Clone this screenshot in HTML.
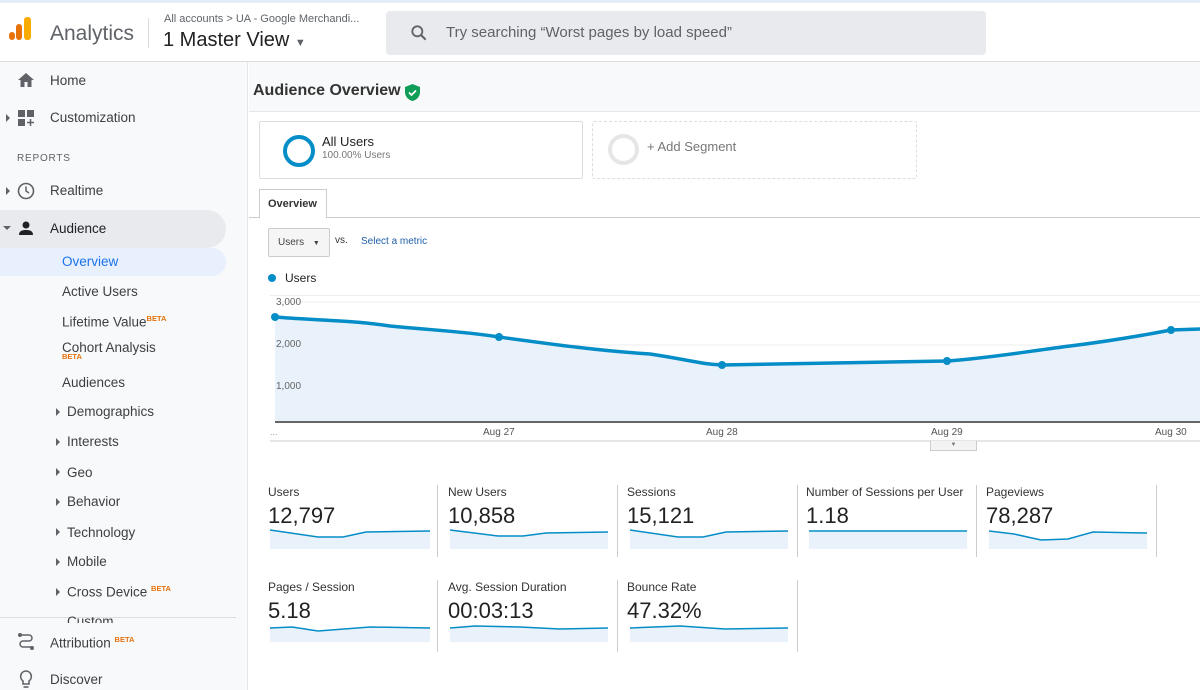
<!DOCTYPE html>
<html><head><meta charset="utf-8"><style>
*{margin:0;padding:0;box-sizing:border-box}
body{width:1200px;height:690px;overflow:hidden;font-family:"Liberation Sans",Arial,sans-serif;background:#fff;position:relative;color:#333}
.a{position:absolute}
#top{left:0;top:0;width:1200px;height:62px;background:#fff;border-top:3px solid #e3eef9;border-bottom:1px solid #dadce0}
#side{left:0;top:62px;width:248px;height:628px;background:#f8f9fa;border-right:1px solid #e6e6e6}
.nav{position:absolute;font-size:13.5px;color:#3c4043}
.sub{position:absolute;left:62px;font-size:13.5px;color:#3c4043}
.sub2{position:absolute;left:67px;font-size:13.5px;color:#3c4043}
.tri{position:absolute;left:56px;width:0;height:0;border-top:4px solid transparent;border-bottom:4px solid transparent;border-left:4px solid #5f6368}
.beta{font-size:7.5px;color:#e8710a;font-weight:bold;vertical-align:super}
.lab{position:absolute;font-size:12px;color:#333}
.val{position:absolute;font-size:22px;color:#222}
.sep{position:absolute;width:1px;background:#ccc}
</style></head><body>
<div id="top" class="a">
 <div class="a" style="left:9px;top:29px;width:6px;height:8px;border-radius:3px;background:#e8710a"></div>
 <div class="a" style="left:16px;top:21px;width:6px;height:16px;border-radius:3px;background:#e8710a"></div>
 <div class="a" style="left:24px;top:14px;width:7px;height:23px;border-radius:3px;background:#f9ab00"></div>
 <div class="a" style="left:50px;top:19px;font-size:21px;color:#5f6368">Analytics</div>
 <div class="a" style="left:148px;top:15px;width:1px;height:30px;background:#dadce0"></div>
 <div class="a" style="left:164px;top:10px;font-size:11px;color:#5f6368">All accounts &gt; UA - Google Merchandi...</div>
 <div class="a" style="left:163px;top:26px;font-size:20px;color:#202124">1 Master View <span style="font-size:11px;color:#5f6368">▼</span></div>
 <div class="a" style="left:386px;top:8px;width:600px;height:44px;background:#e8eaed;border-radius:4px"></div>
 <svg class="a" style="left:409px;top:20px" width="20" height="20" viewBox="0 0 24 24"><circle cx="10" cy="10" r="6" fill="none" stroke="#5f6368" stroke-width="2.2"/><path d="M14.5 14.5L20 20" stroke="#5f6368" stroke-width="2.5"/></svg>
 <div class="a" style="left:446px;top:21px;font-size:15px;color:#5f6368">Try searching “Worst pages by load speed”</div>
</div>
<div id="side" class="a">
 <div class="a" style="left:0;top:148px;width:226px;height:38px;background:#e8eaed;border-radius:0 19px 19px 0"></div>
 <div class="a" style="left:0;top:186px;width:226px;height:28px;background:#e8f0fe;border-radius:0 14px 14px 0"></div>
 <div class="a" style="left:0;top:555px;width:236px;height:1px;background:#ddd"></div>
</div>
<svg class="a" style="left:17px;top:72px" width="18" height="16" viewBox="0 0 18 16"><path d="M9 1L1 8h2.5v7h4v-5h3v5h4V8H17z" fill="#5f6368"/></svg>
<div class="nav" style="left:50px;top:73px">Home</div>
<div class="a" style="left:6px;top:114px;border-top:4px solid transparent;border-bottom:4px solid transparent;border-left:4px solid #5f6368"></div>
<svg class="a" style="left:18px;top:110px" width="16" height="16"><rect x="0" y="0" width="7" height="7" fill="#5f6368"/><rect x="9" y="0" width="7" height="7" fill="#5f6368"/><rect x="0" y="9" width="7" height="7" fill="#5f6368"/><path d="M12.5 9v7M9 12.5h7" stroke="#5f6368" stroke-width="1.5"/></svg>
<div class="nav" style="left:50px;top:110px">Customization</div>
<div class="a" style="left:17px;top:153px;font-size:10px;color:#5f6368;letter-spacing:.8px">REPORTS</div>
<div class="a" style="left:6px;top:187px;border-top:4px solid transparent;border-bottom:4px solid transparent;border-left:4px solid #5f6368"></div>
<svg class="a" style="left:17px;top:182px" width="18" height="18"><circle cx="9" cy="9" r="7.5" fill="none" stroke="#5f6368" stroke-width="1.6"/><path d="M9 4.5V9l3 2" fill="none" stroke="#5f6368" stroke-width="1.5"/></svg>
<div class="nav" style="left:50px;top:183px">Realtime</div>
<div class="a" style="left:3px;top:226px;border-left:4px solid transparent;border-right:4px solid transparent;border-top:4px solid #5f6368"></div>
<svg class="a" style="left:18px;top:221px" width="16" height="14"><circle cx="8" cy="4" r="3.5" fill="#202124"/><path d="M1 14c0-4 3-5 7-5s7 1 7 5z" fill="#202124"/></svg>
<div class="nav" style="left:50px;top:221px;color:#202124">Audience</div>
<div class="sub" style="top:254px;color:#1a73e8">Overview</div>
<div class="sub" style="top:284px">Active Users</div>
<div class="sub" style="top:314px">Lifetime Value<span class="beta">BETA</span></div>
<div class="sub" style="top:340px">Cohort Analysis</div>
<div class="a beta" style="left:62px;top:352px;vertical-align:baseline">BETA</div>
<div class="sub" style="top:375px">Audiences</div>
<div class="tri" style="top:408px"></div><div class="sub2" style="top:404px">Demographics</div>
<div class="tri" style="top:438px"></div><div class="sub2" style="top:434px">Interests</div>
<div class="tri" style="top:468px"></div><div class="sub2" style="top:465px">Geo</div>
<div class="tri" style="top:498px"></div><div class="sub2" style="top:494px">Behavior</div>
<div class="tri" style="top:528px"></div><div class="sub2" style="top:525px">Technology</div>
<div class="tri" style="top:558px"></div><div class="sub2" style="top:554px">Mobile</div>
<div class="tri" style="top:588px"></div><div class="sub2" style="top:584px">Cross Device <span class="beta">BETA</span></div>
<div class="a" style="left:0;top:612px;width:236px;height:11px;overflow:hidden"><div class="sub2" style="top:2px">Custom</div></div>
<svg class="a" style="left:17px;top:632px" width="18" height="20"><circle cx="3" cy="3" r="2" fill="#5f6368"/><circle cx="15" cy="16" r="2" fill="#5f6368"/><path d="M3 3h9a3 3 0 0 1 0 6H6a3 3 0 0 0 0 6h9" fill="none" stroke="#5f6368" stroke-width="1.5"/></svg>
<div class="nav" style="left:50px;top:635px">Attribution <span class="beta">BETA</span></div>
<svg class="a" style="left:19px;top:670px" width="14" height="20"><path d="M7 1a5.5 5.5 0 0 0-3 10v3h6v-3A5.5 5.5 0 0 0 7 1z" fill="none" stroke="#5f6368" stroke-width="1.6"/><path d="M4.5 17h5" stroke="#5f6368" stroke-width="1.6"/></svg>
<div class="nav" style="left:50px;top:672px">Discover</div>

<!-- main -->
<div class="a" style="left:249px;top:62px;width:951px;height:50px;background:#f8f9fa;border-bottom:1px solid #e6e6e6"></div>
<div class="a" style="left:253px;top:82px;font-size:16px;font-weight:bold;color:#333">Audience Overview</div>
<svg class="a" style="left:405px;top:84px" width="15" height="17" viewBox="0 0 15 17"><path d="M7.5 0L0 3v5c0 4.5 3.2 8 7.5 9C11.8 16 15 12.5 15 8V3z" fill="#0f9d58"/><path d="M4 8.5l2.5 2.5L11 6.5" fill="none" stroke="#fff" stroke-width="1.7"/></svg>
<div class="a" style="left:259px;top:121px;width:324px;height:58px;border:1px solid #ddd;border-radius:2px"></div>
<div class="a" style="left:283px;top:135px;width:32px;height:32px;border:4px solid #058dc7;border-radius:50%"></div>
<div class="a" style="left:322px;top:134px;font-size:13px;color:#222">All Users</div>
<div class="a" style="left:322px;top:150px;font-size:10px;color:#777">100.00% Users</div>
<div class="a" style="left:592px;top:121px;width:325px;height:58px;border:1px dashed #ddd;border-radius:2px"></div>
<div class="a" style="left:608px;top:134px;width:31px;height:31px;border:4px solid #e6e6e6;border-radius:50%"></div>
<div class="a" style="left:647px;top:139px;font-size:13px;color:#777">+ Add Segment</div>
<div class="a" style="left:249px;top:217px;width:951px;height:1px;background:#ccc"></div>
<div class="a" style="left:259px;top:189px;width:68px;height:29px;border:1px solid #ccc;border-bottom:none;background:#fff;font-size:11px;font-weight:bold;color:#333;padding:8px 0 0 8px">Overview</div>
<div class="a" style="left:268px;top:228px;width:62px;height:29px;border:1px solid #ccc;border-radius:2px;background:#f5f5f5;font-size:10px;color:#444;padding:8px 0 0 9px">Users <span style="font-size:7px;margin-left:6px">▼</span></div>
<div class="a" style="left:335px;top:235px;font-size:10px;color:#333">vs.</div>
<div class="a" style="left:361px;top:236px;font-size:10px;color:#1e5fa8">Select a metric</div>
<div class="a" style="left:268px;top:274px;width:8px;height:8px;border-radius:50%;background:#058dc7"></div>
<div class="a" style="left:285px;top:271px;font-size:12px;color:#222">Users</div>
<div class="a" style="left:270px;top:295px;width:930px;height:1px;background:#eee"></div>
<svg class="a" style="left:270px;top:296px" width="930" height="150">
<line x1="5" y1="6" x2="930" y2="6" stroke="#eee"/>
<line x1="5" y1="49" x2="930" y2="49" stroke="#eee"/>
<line x1="5" y1="91" x2="930" y2="91" stroke="#eee"/>
<path d="M5 21 C40 24 80 24 120 30 C160 34 200 36 229 41 C280 48 330 55 380 58 C420 64 430 68 452 69 C560 67 640 66 677 65 C720 62 760 55 800 50 C840 45 880 38 901 34 L930 33 L930 126 L5 126Z" fill="#e9f1fa"/>
<path d="M5 21 C40 24 80 24 120 30 C160 34 200 36 229 41 C280 48 330 55 380 58 C420 64 430 68 452 69 C560 67 640 66 677 65 C720 62 760 55 800 50 C840 45 880 38 901 34 L930 33" fill="none" stroke="#058dc7" stroke-width="3.5"/>
<circle cx="5" cy="21" r="4" fill="#058dc7"/><circle cx="229" cy="41" r="4" fill="#058dc7"/><circle cx="452" cy="69" r="4" fill="#058dc7"/><circle cx="677" cy="65" r="4" fill="#058dc7"/><circle cx="901" cy="34" r="4" fill="#058dc7"/>
<line x1="5" y1="126" x2="930" y2="126" stroke="#666" stroke-width="2"/>
<line x1="0" y1="145" x2="930" y2="145" stroke="#ccc"/>
</svg>
<div class="a" style="left:276px;top:297px;font-size:10px;color:#666">3,000</div>
<div class="a" style="left:276px;top:339px;font-size:10px;color:#666">2,000</div>
<div class="a" style="left:276px;top:381px;font-size:10px;color:#666">1,000</div>
<div class="a" style="left:270px;top:427px;font-size:9px;color:#999">...</div>
<div class="a" style="left:483px;top:427px;font-size:10px;color:#555">Aug 27</div>
<div class="a" style="left:706px;top:427px;font-size:10px;color:#555">Aug 28</div>
<div class="a" style="left:931px;top:427px;font-size:10px;color:#555">Aug 29</div>
<div class="a" style="left:1155px;top:427px;font-size:10px;color:#555">Aug 30</div>
<div class="a" style="left:930px;top:441px;width:47px;height:10px;border:1px solid #ccc;border-top:none;background:#f3f3f3;font-size:6px;color:#777;text-align:center;line-height:8px">▼</div>

<!-- metrics -->
<div class="sep" style="left:437px;top:485px;height:72px"></div>
<div class="sep" style="left:617px;top:485px;height:72px"></div>
<div class="sep" style="left:797px;top:485px;height:72px"></div>
<div class="sep" style="left:976px;top:485px;height:72px"></div>
<div class="sep" style="left:1156px;top:485px;height:72px"></div>
<div class="sep" style="left:437px;top:580px;height:72px"></div>
<div class="sep" style="left:617px;top:580px;height:72px"></div>
<div class="sep" style="left:797px;top:580px;height:72px"></div>

<div class="lab" style="left:268px;top:485px">Users</div><div class="val" style="left:268px;top:503px">12,797</div>
<div class="lab" style="left:448px;top:485px">New Users</div><div class="val" style="left:448px;top:503px">10,858</div>
<div class="lab" style="left:627px;top:485px">Sessions</div><div class="val" style="left:627px;top:503px">15,121</div>
<div class="lab" style="left:806px;top:485px">Number of Sessions per User</div><div class="val" style="left:806px;top:503px">1.18</div>
<div class="lab" style="left:986px;top:485px">Pageviews</div><div class="val" style="left:986px;top:503px">78,287</div>
<div class="lab" style="left:268px;top:580px">Pages / Session</div><div class="val" style="left:268px;top:598px">5.18</div>
<div class="lab" style="left:448px;top:580px">Avg. Session Duration</div><div class="val" style="left:448px;top:598px">00:03:13</div>
<div class="lab" style="left:627px;top:580px">Bounce Rate</div><div class="val" style="left:627px;top:598px">47.32%</div>

<svg class="a" style="left:270px;top:528px" width="160" height="21"><path d="M0 2L48 9L73 9L96 4L160 3V21H0Z" fill="#e9f1fa"/><path d="M0 2L48 9L73 9L96 4L160 3" fill="none" stroke="#058dc7" stroke-width="1.5"/></svg>
<svg class="a" style="left:450px;top:528px" width="158" height="21"><path d="M0 2L48 8L73 8L96 5L158 4V21H0Z" fill="#e9f1fa"/><path d="M0 2L48 8L73 8L96 5L158 4" fill="none" stroke="#058dc7" stroke-width="1.5"/></svg>
<svg class="a" style="left:630px;top:528px" width="158" height="21"><path d="M0 2L48 9L73 9L96 4L158 3V21H0Z" fill="#e9f1fa"/><path d="M0 2L48 9L73 9L96 4L158 3" fill="none" stroke="#058dc7" stroke-width="1.5"/></svg>
<svg class="a" style="left:809px;top:529px" width="158" height="20"><path d="M0 2H158V20H0Z" fill="#e9f1fa"/><path d="M0 2H158" fill="none" stroke="#058dc7" stroke-width="1.5"/></svg>
<svg class="a" style="left:989px;top:529px" width="158" height="20"><path d="M0 2L25 5L52 11L79 10L104 3L158 4V20H0Z" fill="#e9f1fa"/><path d="M0 2L25 5L52 11L79 10L104 3L158 4" fill="none" stroke="#058dc7" stroke-width="1.5"/></svg>
<svg class="a" style="left:270px;top:623px" width="160" height="19"><path d="M0 5L22 4L48 8L100 4L160 5V19H0Z" fill="#e9f1fa"/><path d="M0 5L22 4L48 8L100 4L160 5" fill="none" stroke="#058dc7" stroke-width="1.5"/></svg>
<svg class="a" style="left:450px;top:623px" width="158" height="19"><path d="M0 5L25 3L70 4L110 6L158 5V19H0Z" fill="#e9f1fa"/><path d="M0 5L25 3L70 4L110 6L158 5" fill="none" stroke="#058dc7" stroke-width="1.5"/></svg>
<svg class="a" style="left:630px;top:623px" width="158" height="19"><path d="M0 5L50 3L95 6L158 5V19H0Z" fill="#e9f1fa"/><path d="M0 5L50 3L95 6L158 5" fill="none" stroke="#058dc7" stroke-width="1.5"/></svg>
</body></html>
